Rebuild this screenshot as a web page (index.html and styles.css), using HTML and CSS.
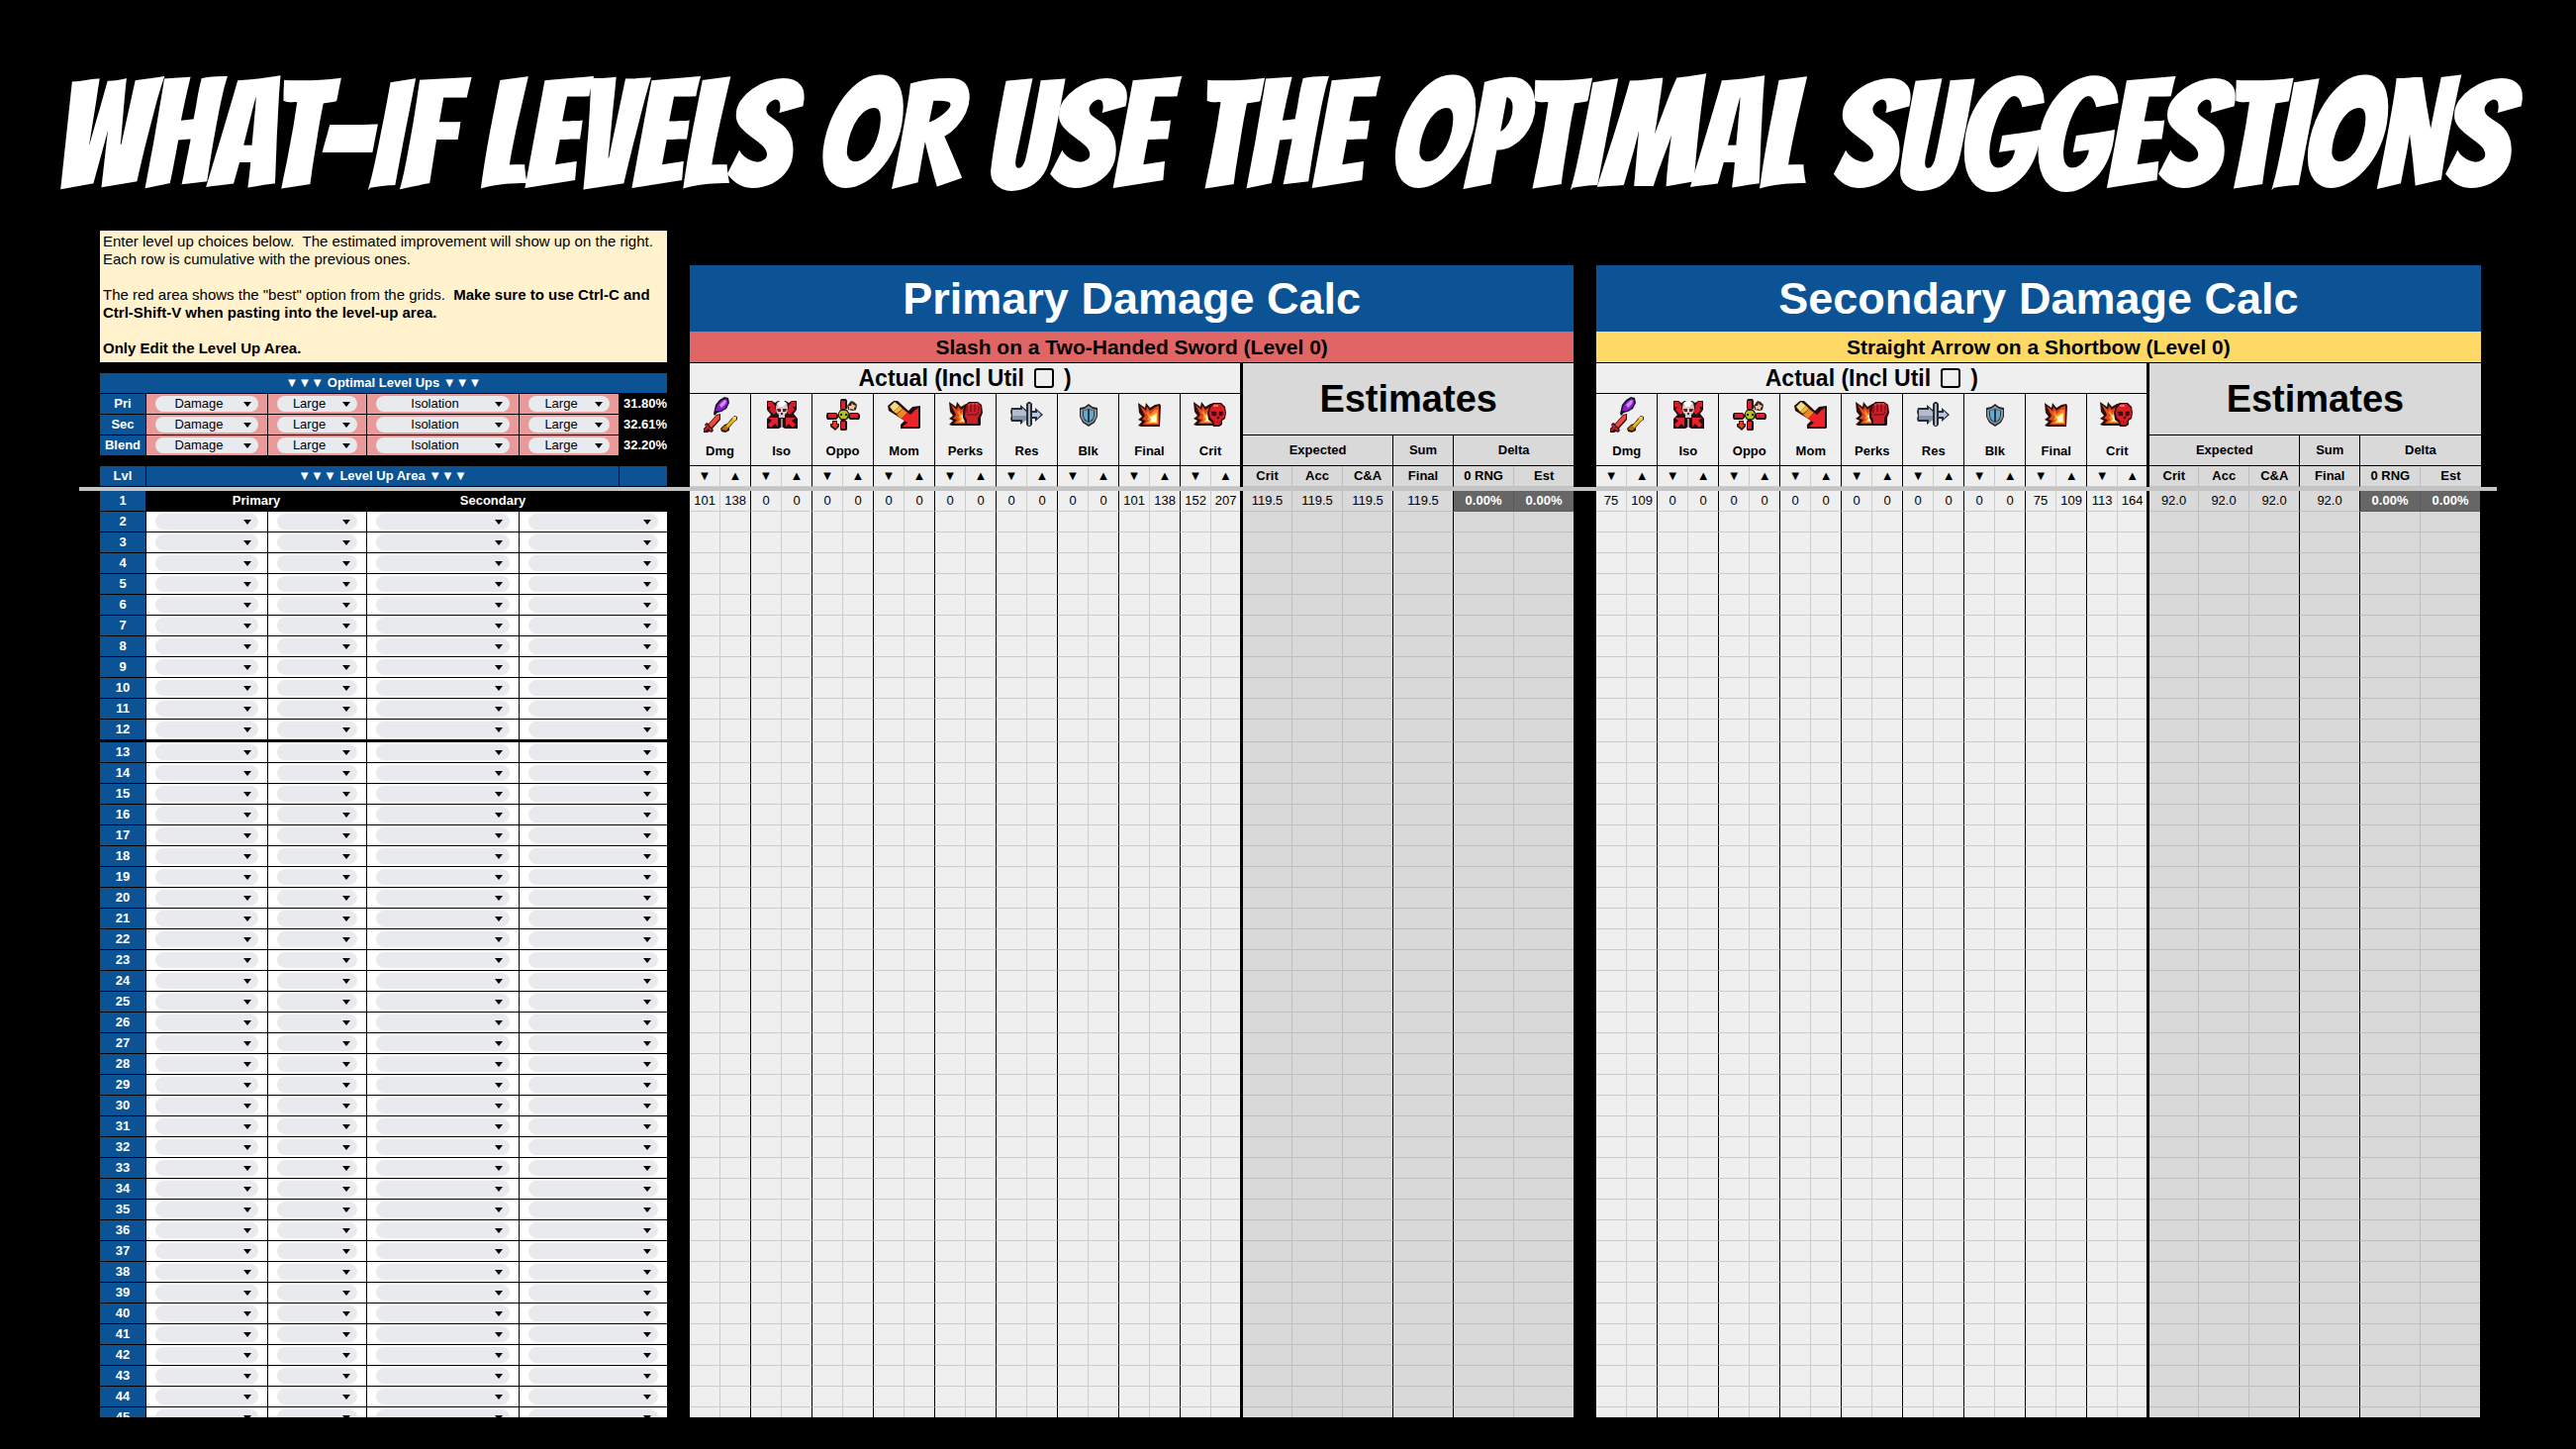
FILE: index.html
```
<!DOCTYPE html>
<html lang="en">
<head>
<meta charset="utf-8">
<title>Level Up Planner</title>
<link rel="stylesheet" href="styles.css">
</head>
<body>
<svg class="sprite" aria-hidden="true">
  <symbol id="i-dmg" viewBox="0 0 36 36">
    <path d="M11 17l2-9 4-5 5-3 4 1 1 5-3 6-5 3-4 1-3 3z" fill="#1d1024"/>
    <path d="M13 14l2-6 4-4 4-2 2 1v4l-3 5-4 2z" fill="#8a1fd0"/>
    <path d="M17 8l5-5 2 1-1 3-4 4z" fill="#d08cf5"/>
    <path d="M18 17v6l-8 9 1 2-2 2-2-1-2 1H1v-4l2-2-1-2 2-2 2 1 8-9z" fill="#2a0d10"/>
    <path d="M17 18v4l-8 9-3-3 8-9z" fill="#ef4a3c"/>
    <path d="M3 28l6 6M2 34l4-4" stroke="#c8202c" stroke-width="2"/>
    <path d="M32 19l3 1v3l-3 2-5 6v3l-4 2-4-1-1-3 4-4 3-1 4-5z" fill="#2b1a05"/>
    <path d="M33 21l-9 10" stroke="#f0b429" stroke-width="3"/>
    <path d="M19 33l3-4 4 2-2 3z" fill="#b96d10"/>
    <path d="M31 20h3v3l-2 1-2-2z" fill="#f6cf4a"/>
  </symbol>
  <symbol id="i-iso" viewBox="0 0 36 36">
    <path d="M3 4h5l3 2 3-2h8l3 2 3-2h5v9l-3 4 4 5v10H21l-3-2-3 2H3V22l4-4-4-5z" fill="#221014"/>
    <path d="M4 5h4l3 4v3l3 2-4 4-5-5 2-3H4zM32 5h-4l-3 4v3l-3 2 4 4 5-5-2-3h3z" fill="#d61c28"/>
    <path d="M4 21h10v9l-3-3-4 4-3-3 4-4zM32 21H22v9l3-3 4 4 3-3-4-4z" fill="#e8202c"/>
    <path d="M18 22v8" stroke="#8d8d8d" stroke-width="2"/>
    <path d="M13 6l3-2h4l3 2 1 5-1 5-2 2v3h-6v-3l-2-2-1-5z" fill="#dcc9c6"/>
    <path d="M14 6l3-2h3l2 3-3 3h-4z" fill="#fff"/>
    <path d="M13 12h4v3h-3zM19 12h4l-1 3h-3zM17 16h2v2h-2z" fill="#4d2329"/>
  </symbol>
  <symbol id="i-oppo" viewBox="0 0 36 36">
    <path d="M16 2h5l1 2v8l-2 1h-4l-1-1V4zM16 23h4l2 2v8l-1 1h-5l-1-1v-8zM2 16h9l2 2v3l-2 2H2l-1-2v-3zM25 16h8l2 2v3l-1 2h-9l-2-2v-3z" fill="#260d12"/>
    <path d="M16 4h4v8h-4zM16 25h4v7h-4zM3 17h8v4H3zM25 17h8v4h-8z" fill="#d91f2b"/>
    <path d="M15 13h7l2 3v4l-2 3h-7l-2-3v-4z" fill="#2c2c0c"/>
    <path d="M16 14h5l2 3-1 3-1 2h-5l-2-3v-3z" fill="#b3bf22"/>
    <path d="M15 17h2v2h-2zM20 17h2v2h-2zM17 20h3" fill="#23230a"/>
    <path d="M26 4l3 1 3 3-1 5-3 1-5-1-1-4z" fill="#39241a"/>
    <path d="M27 6l1 2 3 1-2 2v2l-3-1-2 1v-3l-1-1h3z" fill="#f3c59c"/>
    <path d="M7 24h5v3h2v3l-4 4-5-4v-3h2z" fill="#3b130e"/>
    <path d="M8 25h3v3h2l-3 4-4-4h2z" fill="#e0421f"/>
  </symbol>
  <symbol id="i-mom" viewBox="0 0 36 36">
    <path d="M1 9l6-5h4l11 10 4-4 8-1v22l-1 1H14v-4l4-4L2 14z" fill="#260c0f"/>
    <path d="M3 10l5-5 5 4-6 6z" fill="#f2dd84"/>
    <path d="M7 15l6-6 3 3-6 5z" fill="#f0b92c"/>
    <path d="M10 18l6-6 5 4-6 6z" fill="#ef861f"/>
    <path d="M15 22l6-6 3 2 5-5 3-2v19H16l5-4z" fill="#ee2229"/>
  </symbol>
  <symbol id="i-blast" viewBox="0 0 36 36">
    <path d="M6 6l7 5 1-5 4 5 5-3 5-1 1 2-1 21H9l-3-1 4-4-4-2 4-3-3-4z" fill="#2a1009"/>
    <path d="M8 9l6 5 1-4 3 4 6-4 3-1v19H11l3-4-4-1 3-4z" fill="#e2441b"/>
    <path d="M11 13l4 4 1-3 2 4 5-5h3v14h-12l3-3-2-2 2-2z" fill="#f98a22"/>
    <path d="M15 17l3 3 7-4v10h-8l2-3z" fill="#ffe36b"/>
    <path d="M19 21l5-3v7h-5z" fill="#fffbe0"/>
  </symbol>
  <symbol id="i-final" viewBox="0 0 36 36"><use href="#i-blast" x="0" y="0" width="36" height="36"/></symbol>
  <symbol id="i-perks" viewBox="0 0 36 36">
    <use href="#i-blast" x="-5" y="-1" width="36" height="36"/>
    <path d="M17 9l4-4h9l4 3 1 8-2 5v7l-1 1H18l-1-4-2-4v-8z" fill="#2a0a0e"/>
    <path d="M18 10l4-4h8l3 3v7l-3 5v6H19v-4l-2-3z" fill="#c91f28"/>
    <path d="M19 9v7M23 8v7M27 8v7M31 9v5M19 18h10l2-3" stroke="#5d0f14" fill="none"/>
    <path d="M20 8h2M24 7h2M28 7h2" stroke="#f26a5e"/>
  </symbol>
  <symbol id="i-crit" viewBox="0 0 36 36">
    <use href="#i-blast" x="-5" y="-1" width="36" height="36"/>
    <path d="M17 10l4-4h8l4 4 1 6-1 6-3 2v4l-3 2h-6l-1-4-4-3-1-7z" fill="#2a0a0e"/>
    <path d="M18 11l4-4h6l4 4 1 5-1 5-3 2v3l-2 2h-5l-1-4-3-3-1-5z" fill="#d81f26"/>
    <path d="M19 15h5v4h-4zM27 15h4l-1 4h-3zM25 20h2v2h-2zM22 24v3M25 24v3M28 24v3" fill="#480a0e" stroke="#480a0e" stroke-width=".5"/>
    <path d="M21 9h5" stroke="#f4705f" stroke-width="2"/>
  </symbol>
  <symbol id="i-res" viewBox="0 0 36 36">
    <path d="M2 11h9V8l6 5V7l2-2h2l2 2v7h3v-3l8 7-8 7v-3h-3v6l-2 2h-2l-2-2v-5l-6 5v-3H2l-1-3 1-3-1-4z" fill="#262b36"/>
    <path d="M3 13h10v-2l4 4v8l-4 3v-3H3z" fill="#b3bccd"/>
    <path d="M3 19h14v4l-4 3v-3H3z" fill="#8693ad"/>
    <path d="M19 7h2v22h-2z" fill="#aeb6bd"/>
    <path d="M23 16h5v-2l4 4-4 4v-2h-5z" fill="#b9c7e0"/>
  </symbol>
  <symbol id="i-blk" viewBox="0 0 36 36">
    <path d="M18 7l4 3 5 1v9l-3 6-6 4-6-4-3-6v-9l5-1z" fill="#23272c"/>
    <path d="M18 9l4 3 4 1v7l-3 5-5 3-5-3-3-5v-7l4-1z" fill="#8b959c"/>
    <path d="M18 12l6 2v5l-2 5-4 2-4-2-2-5v-5z" fill="#203848"/>
    <path d="M17 13v12l-3-3-1-3v-5zM19 13v12l3-3 1-3v-5z" fill="#69a9cb"/>
  </symbol>
</svg>

<h1 class="headline">What-if levels or use the optimal suggestions</h1>

<main class="sheet">
  <div class="panes frozen">
    <section class="planner">
      <div class="note">
        <p>Enter level up choices below.&nbsp; The estimated improvement will show up on the right.<br>Each row is cumulative with the previous ones.</p>
        <p>The red area shows the "best" option from the grids.&nbsp; <b>Make sure to use Ctrl-C and Ctrl-Shift-V when pasting into the level-up area.</b></p>
        <p><b>Only Edit the Level Up Area.</b></p>
      </div>
      <table class="plan" id="optimal"></table>
      <table class="plan" id="level-head"></table>
    </section>
    <table class="calc" id="primary-head"></table>
    <table class="calc" id="secondary-head"></table>
  </div>
  <div class="freeze-bar"></div>
  <div class="panes scrolling">
    <table class="plan" id="level-body"></table>
    <table class="calc" id="primary-body"></table>
    <table class="calc" id="secondary-body"></table>
  </div>
</main>
<script src="sheet.js"></script>
</body>
</html>
```
FILE: styles.css
```
* { box-sizing: border-box; }

html, body { height: 100%; }

body {
  margin: 0;
  display: flex;
  flex-direction: column;
  background: #000;
  color: #000;
  font: 13px/18px "Liberation Sans", Arial, sans-serif;
  overflow: hidden;
}

.sprite { position: absolute; width: 0; height: 0; }

.headline {
  margin: 0;
  padding: 57px 12px 0 0;
  height: 233px;
  flex: none;
  color: #fff;
  font: normal 150px/160px "Bangers", "Anton", sans-serif;
  -webkit-text-stroke: 2px #fff;
  text-align: center;
  text-transform: uppercase;
  white-space: nowrap;
}

.sheet {
  flex: 1;
  min-height: 0;
  display: flex;
  flex-direction: column;
  padding: 0 80px 32px;
}

.panes {
  display: grid;
  grid-template-columns: 573fr 893fr 893fr;
  column-gap: 23px;
  padding: 0 17px 0 21px;
}
.frozen { align-items: end; }
.scrolling { flex: 1; min-height: 0; overflow: hidden; align-items: start; }
.freeze-bar { height: 4px; flex: none; background: #c4c4c4; }

.planner { display: flex; flex-direction: column; }
.planner #level-head { margin-top: 10px; }

.note {
  height: 133px;
  margin-bottom: 11px;
  padding: 2px 3px;
  background: #fff2cc;
  font-size: 15px;
}
.note p { margin: 0 0 18px; }

table {
  width: 100%;
  table-layout: fixed;
  border-collapse: separate;
  border-spacing: 0;
}
th, td {
  height: 21px;
  padding: 0;
  overflow: hidden;
  text-align: center;
  white-space: nowrap;
  line-height: 18px;
}

/* level-up planner */
.plan th, .plan td { border-right: 1px solid #000; border-bottom: 1px solid #000; }
.plan tr > :last-child { border-right: 0; }
.plan th { background: #0b5394; color: #fff; }
.plan td { background: #fff; padding: 0 9px; }
.plan .best td { background: #ea9999; }
.plan .best td.gain { padding: 0; background: #000; color: #fff; font-weight: bold; text-align: right; overflow: visible; }
.plan .start td { background: #000; color: #fff; font-weight: bold; }
.plan .split > * { height: 23px; border-bottom-width: 3px; }

.chip {
  position: relative;
  display: block;
  height: 16px;
}
.chip::after {
  content: "";
  position: absolute;
  top: 6px;
  right: 7px;
  border: 4px solid transparent;
  border-top: 5px solid #000;
  border-bottom: 0;
  pointer-events: none;
}
.chip select {
  display: block;
  width: 100%;
  height: 16px;
  margin: 0;
  padding: 0 16px 0 0;
  border: 0;
  border-radius: 8px;
  background: #e8eaed;
  color: #000;
  font: 13px/16px "Liberation Sans", Arial, sans-serif;
  text-align: center;
  text-align-last: center;
  appearance: none;
}

/* damage tables */
.calc th, .calc td {
  background: #efefef;
  border-right: 1px solid #ccc;
  border-bottom: 1px solid #ccc;
}
.calc .est { background: #d9d9d9; border-color: #bfbfbf; }
.calc .rule { border-right-color: #000; }
.calc .under { border-bottom-color: #000; }
.calc .wall { border: 0; background: #000; }
.calc tr > .edge { border-right: 0; }
.calc .delta { background: #666; color: #fff; font-weight: bold; border-color: #5b5b5b; }
.calc .tall > * { height: 23px; }
.calc .title { height: 67px; border: 0; background: #0b5394; color: #fff; font-size: 45px; line-height: 60px; }
.calc .attack { height: 32px; border-right: 0; font-size: 21px; line-height: 30px; }
.calc .melee { background: #e06666; }
.calc .ranged { background: #ffd966; }
.calc .actual { height: 31px; font-size: 23px; line-height: 30px; }
.calc .estimates { height: 73px; font-size: 38px; line-height: 60px; }
.calc .group { height: 31px; }
.calc .stat { height: 73px; vertical-align: top; }
.stat svg { display: block; width: 36px; height: 36px; margin: 3px auto 10px; }

.util { display: inline-flex; align-items: center; white-space: pre; }
.util input {
  width: 20px;
  height: 20px;
  margin: 0 10px;
  border: 2px solid #000;
  border-radius: 3px;
  background: transparent;
  appearance: none;
}
```
FILE: sheet.js
```
const STATS = [
  ["Dmg", "dmg"], ["Iso", "iso"], ["Oppo", "oppo"], ["Mom", "mom"], ["Perks", "perks"],
  ["Res", "res"], ["Blk", "blk"], ["Final", "final"], ["Crit", "crit"]
];
const LAST_LEVEL = 45;

const cols = widths => "<colgroup>" + widths.map(w => `<col style="width:${w}px">`).join("") + "</colgroup>";
const planCols = cols([47, 123, 100, 154, 101, 48]);
const calcCols = cols([...Array(17).fill(31), 29, 3, 50, 51, 51, 61, 61, 60]);
const fill = (id, html) => { document.getElementById(id).innerHTML = html; };

const chip = (label, value) =>
  `<span class="chip"><select aria-label="${label}"><option>${value}</option></select></span>`;

/* planner */
const best = [["Pri", "31.80%"], ["Sec", "32.61%"], ["Blend", "32.20%"]].map(([name, gain]) =>
  `<tr class="best"><th>${name}</th>` +
  ["Damage", "Large", "Isolation", "Large"].map((v, i) => `<td>${chip(name + " choice " + (i + 1), v)}</td>`).join("") +
  `<td class="gain">${gain}</td></tr>`).join("");
fill("optimal", planCols + `<tr><th colspan="6">▼▼▼ Optimal Level Ups ▼▼▼</th></tr>` + best);
fill("level-head", planCols + `<tr><th>Lvl</th><th colspan="4">▼▼▼ Level Up Area ▼▼▼</th><th></th></tr>`);

let levels = `<tr class="start"><th>1</th><td colspan="2">Primary</td><td colspan="2">Secondary</td><td></td></tr>`;
for (let n = 2; n <= LAST_LEVEL; n++) {
  levels += `<tr${n === 12 ? ' class="split"' : ""}><th>${n}</th>` +
    [1, 2, 3, 4].map(i => `<td${i === 4 ? ' colspan="2"' : ""}>${chip(`Level ${n} choice ${i}`, "")}</td>`).join("") + "</tr>";
}
fill("level-body", planCols + levels);

/* damage tables: 18 actual columns, a black wall, 6 estimate columns */
const cellClass = i => {
  if (i < 18) return i === 17 ? "edge" : i % 2 ? "rule" : "";
  return "est" + (i === 20 || i === 21 ? " rule" : i === 23 ? " edge" : "");
};
const withWall = (cells, span) => {
  if (span) cells.splice(18, 0, `<td class="wall" rowspan="${span}"></td>`);
  return cells.join("");
};

function calc(id, title, attack, tone, values) {
  const stats = STATS.map(([name, icon], i) =>
    `<th class="stat under ${i === 8 ? "edge" : "rule"}" colspan="2" rowspan="2"><svg aria-hidden="true"><use href="#i-${icon}"/></svg>${name}</th>`).join("");
  const subs = [...STATS.flatMap(() => ["▼", "▲"]), "Crit", "Acc", "C&amp;A", "Final", "0 RNG", "Est"];
  fill(id + "-head", calcCols +
    `<tr><th class="title" colspan="25">${title}</th></tr>` +
    `<tr><th class="attack under ${tone}" colspan="25">${attack}</th></tr>` +
    `<tr><th class="actual under edge" colspan="18"><label class="util">Actual (Incl Util<input type="checkbox">)</label></th>` +
    `<td class="wall" rowspan="4"></td>` +
    `<th class="estimates est under edge" colspan="6" rowspan="2">Estimates</th></tr>` +
    `<tr>${stats}</tr>` +
    `<tr><th class="group est under rule" colspan="3">Expected</th><th class="group est under rule">Sum</th><th class="group est under edge" colspan="2">Delta</th></tr>` +
    `<tr>${subs.map((s, i) => `<th class="${cellClass(i)}">${s}</th>`).join("")}</tr>`);

  let rows = `<tr>${withWall(values.map((v, i) => `<td class="${cellClass(i)}${i > 21 ? " delta" : ""}">${v}</td>`), LAST_LEVEL)}</tr>`;
  const empty = values.map((v, i) => `<td class="${cellClass(i)}"></td>`).join("");
  for (let n = 2; n <= LAST_LEVEL; n++) rows += `<tr${n === 12 ? ' class="tall"' : ""}>${empty}</tr>`;
  fill(id + "-body", calcCols + rows);
}

const zeros = Array(12).fill(0);
calc("primary", "Primary Damage Calc", "Slash on a Two-Handed Sword (Level 0)", "melee",
  [101, 138, ...zeros, 101, 138, 152, 207, "119.5", "119.5", "119.5", "119.5", "0.00%", "0.00%"]);
calc("secondary", "Secondary Damage Calc", "Straight Arrow on a Shortbow (Level 0)", "ranged",
  [75, 109, ...zeros, 75, 109, 113, 164, "92.0", "92.0", "92.0", "92.0", "0.00%", "0.00%"]);
```
